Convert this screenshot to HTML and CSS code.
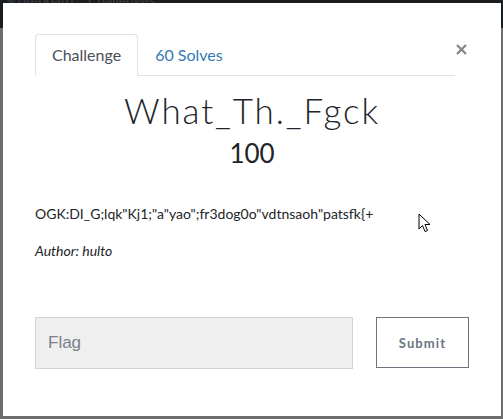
FILE: index.html
```html
<!DOCTYPE html>
<html>
<head>
<meta charset="utf-8">
<link rel="stylesheet" href="styles.css">
</head>
<body>
<div class="navbar"><span class="nav-ghost">Scoreboard &nbsp;&nbsp; Challenges</span></div>
<div class="modal">
  <div class="top-row">
    <ul class="tabs">
      <li class="tab active">Challenge</li>
      <li class="tab link">60 Solves</li>
    </ul>
    <button class="close" aria-label="Close">
      <svg width="11" height="11" viewBox="0 0 11 11"><path d="M1 1 L10 10 M10 1 L1 10" stroke="#888" stroke-width="2.4" fill="none"/></svg>
    </button>
  </div>
  <h2 class="title">What_Th._Fgck</h2>
  <h3 class="value">100</h3>
  <p class="desc">OGK:DI_G;lqk"Kj1;"a"yao";fr3dog0o"vdtnsaoh"patsfk{+</p>
  <p class="author">Author: hulto</p>
  <form class="submit-row">
    <input class="flag" type="text" placeholder="Flag">
    <button class="submit" type="button">Submit</button>
  </form>
</div>
<svg class="cursor" width="14" height="21" viewBox="0 0 14 21"><path d="M1 1 L1 16 L4.5 12.5 L7 18.5 L9.5 17.5 L7 11.5 L12 11.5 Z" fill="#fff" stroke="#000" stroke-width="1" stroke-linejoin="round"/></svg>
</body>
</html>
```
FILE: styles.css
```css
html, body {
  margin: 0;
  height: 100%;
}
body {
  background: #6d6d6d;
  padding: 3px 2px 3px 3px;
  box-sizing: border-box;
  position: relative;
  overflow: hidden;
  font-family: Lato, "Noto Sans", sans-serif;
}
.navbar {
  position: absolute;
  top: 0;
  left: 0;
  right: 0;
  height: 28px;
  background: #1b1e21;
  overflow: hidden;
}
.nav-ghost {
  position: absolute;
  top: -9px;
  left: 4px;
  font-size: 14px;
  color: #3a3d40;
}
.modal {
  position: relative;
  background: #fff;
  height: 413px;
  box-sizing: border-box;
  padding: 31px 32px 0 32px;
}
.top-row {
  display: flex;
  align-items: flex-start;
}
.tabs {
  list-style: none;
  margin: 0;
  padding: 0;
  display: flex;
  width: 420px;
  border-bottom: 1px solid #dee2e6;
}
.tab {
  font-size: 16px;
  line-height: 22px;
  padding: 9px 16px 9px 16px;
  border: 1px solid transparent;
  border-top-left-radius: 4px;
  border-top-right-radius: 4px;
  margin-bottom: -1px;
}
.tab.active {
  color: #495057;
  border-color: #dee2e6 #dee2e6 #fff;
  background: #fff;
}
.tab.link {
  color: #337ab7;
  padding-left: 16px;
}
.close {
  border: 0;
  background: none;
  padding: 0;
  margin: 10px 0 0 1px;
  width: 11px;
  height: 11px;
  display: block;
}
.close svg { display: block; }
.title {
  margin: 14px 0 0;
  text-align: center;
  font-family: Lato, sans-serif;
  font-weight: 300;
  font-size: 35px;
  line-height: 40px;
  letter-spacing: 1.9px;
  color: #212529;
}
.value {
  margin: 6px 0 0;
  text-align: center;
  font-weight: 400;
  font-size: 26px;
  line-height: 34px;
  color: #212529;
}
.desc {
  margin: 34px 0 0;
  font-size: 14px;
  line-height: 20px;
  color: #212529;
}
.author {
  margin: 17px 0 0;
  font-size: 14px;
  line-height: 20px;
  font-style: italic;
  font-weight: 400;
  color: #212529;
}
.submit-row {
  display: flex;
  margin-top: 56px;
  gap: 23px;
}
.flag {
  flex: 0 0 auto;
  width: 318px;
  height: 52px;
  box-sizing: border-box;
  background: #efefef;
  border: 1px solid #ced4da;
  border-radius: 0;
  padding: 0 12px;
  font-family: "Liberation Sans", Arial, sans-serif;
  font-size: 17px;
  color: #495057;
  outline: none;
}
.flag::placeholder {
  color: #7a8188;
}
.submit {
  flex: 0 0 auto;
  width: 93px;
  height: 51px;
  box-sizing: border-box;
  background: #fff;
  border: 1px solid #6c757d;
  border-radius: 0;
  font-family: Lato, sans-serif;
  font-weight: 700;
  font-size: 13px;
  letter-spacing: 1.1px;
  color: #6c757d;
  padding: 0;
}
.cursor {
  position: absolute;
  left: 418px;
  top: 213px;
}
```
